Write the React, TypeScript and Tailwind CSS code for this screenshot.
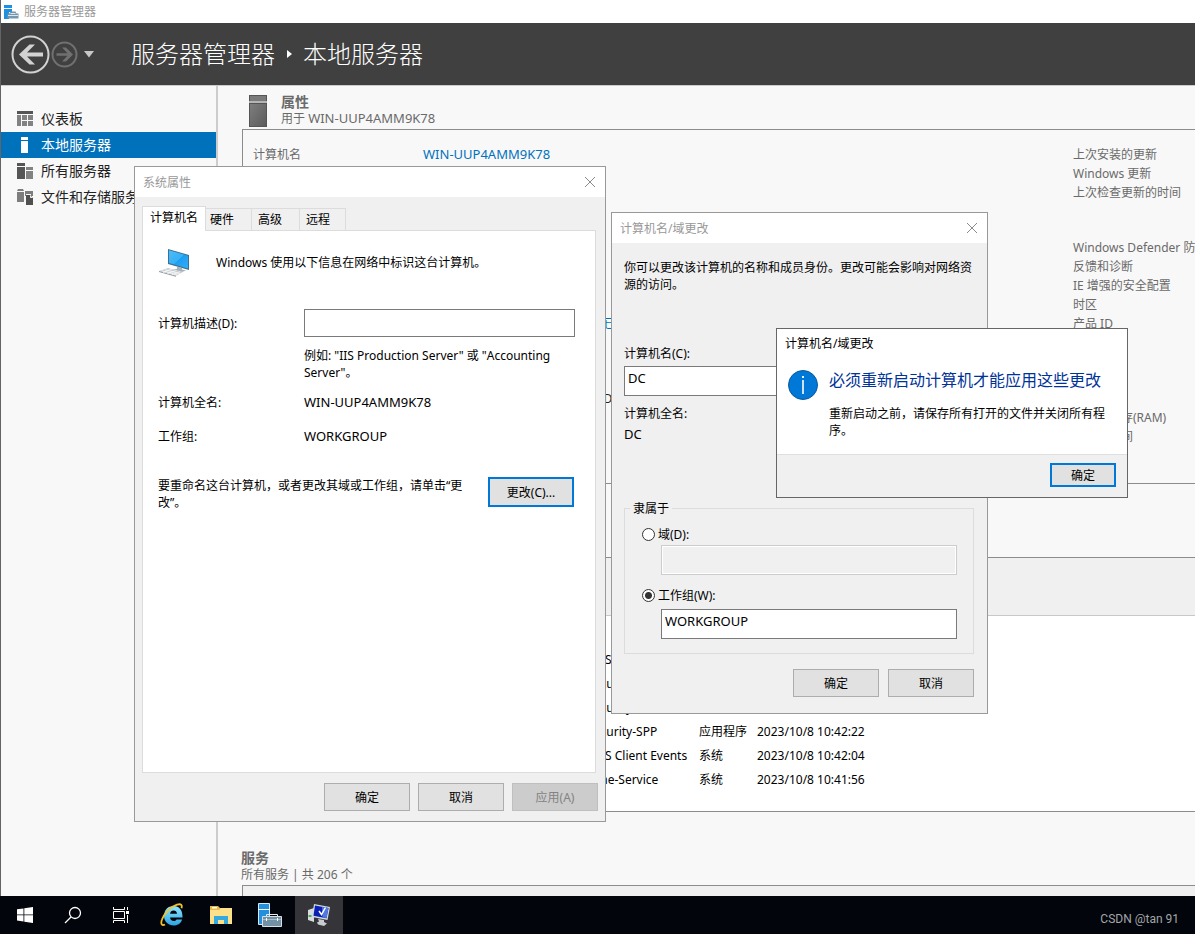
import React from 'react';

interface DialogProps {
  title: string;
  className: string;
  children: React.ReactNode;
}

interface PushButtonProps {
  children: React.ReactNode;
  className?: string;
  disabled?: boolean;
  isDefault?: boolean;
}

const events = [
  { id: 1014, level: '警告', source: 'Microsoft-Windows-DNS Client Events', log: '系统', date: '2023/10/8 10:47:31' },
  { id: 8198, level: '错误', source: 'Microsoft-Windows-Security-SPP', log: '应用程序', date: '2023/10/8 10:44:10' },
  { id: 8198, level: '错误', source: 'Microsoft-Windows-Security-SPP', log: '应用程序', date: '2023/10/8 10:43:52' },
  { id: 8198, level: '错误', source: 'Microsoft-Windows-Security-SPP', log: '应用程序', date: '2023/10/8 10:42:22' },
  { id: 1014, level: '警告', source: 'Microsoft-Windows-DNS Client Events', log: '系统', date: '2023/10/8 10:42:04' },
  { id: 134, level: '警告', source: 'Microsoft-Windows-Time-Service', log: '系统', date: '2023/10/8 10:41:56' },
];

const rightLabels = [
  ['上次安装的更新', 'Windows 更新', '上次检查更新的时间'],
  ['Windows Defender 防病毒', '反馈和诊断', 'IE 增强的安全配置', '时区', '产品 ID'],
  ['处理器', '安装的内存(RAM)', '总磁盘空间'],
];

function PushButton({ children, className = '', disabled, isDefault }: PushButtonProps) {
  const look = disabled
    ? 'border border-[#bfbfbf] bg-[#cccccc] text-[#838383]'
    : isDefault
      ? 'border-2 border-[#0078d7] bg-[#e1e1e1]'
      : 'border border-[#adadad] bg-[#e1e1e1]';
  return (
    <button type="button" disabled={disabled} className={`flex items-center justify-center ${look} ${className}`}>
      {children}
    </button>
  );
}

function Dialog({ title, className, children }: DialogProps) {
  return (
    <section className={`absolute border border-[#999999] bg-[#f0f0f0] ${className}`}>
      <header className="flex h-[30px] items-center justify-between bg-white pl-2 pr-[9px] text-[#999999]">
        <h2>{title}</h2>
        <button type="button" aria-label="关闭">
          <svg width="12" height="12" viewBox="0 0 12 12" stroke="#8a8a8a" fill="none">
            <path d="M1 1l10 10M11 1L1 11" />
          </svg>
        </button>
      </header>
      {children}
    </section>
  );
}

function SectionHeading({ title, children }: { title: string; children: React.ReactNode }) {
  return (
    <div className="h-[35px] text-[#6a6a6a]">
      <h2 className="text-sm leading-4 font-bold">{title}</h2>
      <p>{children}</p>
    </div>
  );
}

function DashboardIcon() {
  return (
    <svg width="16" height="16" viewBox="0 0 16 16" fill="#828282">
      <rect width="16" height="3" fill="#555" />
      <rect y="4" width="4" height="11" />
      <rect x="5" y="4" width="5" height="5" />
      <rect x="11" y="4" width="5" height="5" />
      <rect x="5" y="10" width="5" height="5" />
      <rect x="11" y="10" width="5" height="5" />
    </svg>
  );
}

function LocalServerIcon() {
  return (
    <svg width="16" height="16" viewBox="0 0 16 16" fill="#fff">
      <rect x="4" width="7" height="3" />
      <rect x="4" y="4" width="7" height="12" />
    </svg>
  );
}

function AllServersIcon() {
  return (
    <svg width="16" height="16" viewBox="0 0 16 16" fill="#555">
      <rect width="8" height="3" />
      <rect y="4" width="8" height="12" />
      <rect x="9" y="4" width="7" height="3" fill="#828282" />
      <rect x="9" y="8" width="7" height="8" fill="#828282" />
    </svg>
  );
}

function FileStorageIcon() {
  return (
    <svg width="16" height="16" viewBox="0 0 16 16" fill="#7d7d7d">
      <path d="M1 0h5l1 2H0z" />
      <path d="M0 3h7v10H0z" />
      <path d="M8 2h8v5H8z" />
      <path d="M9 6h4l3 3v7H9z" fill="#505050" />
      <path d="M9 5.500h5M13.500 6.500v2h2" fill="none" stroke="#f8f8f8" />
    </svg>
  );
}

function ComputerIcon() {
  return (
    <svg width="32" height="32" viewBox="0 0 32 32">
      <defs>
        <linearGradient id="screen" x1="0" y1="0" x2="1" y2="1">
          <stop offset="0" stopColor="#4dbcf8" />
          <stop offset="0.5" stopColor="#36b0f7" />
          <stop offset="0.52" stopColor="#1e9df0" />
          <stop offset="1" stopColor="#35aef8" />
        </linearGradient>
      </defs>
      <path d="M10 3l21 6v15L10 18z" fill="#3f6f91" />
      <path d="M11 4.300l19 5.500v12.800L11 17z" fill="url(#screen)" />
      <path d="M19 20.500l5 1.500v1.500l4 1-4 1.500-9-2.300 4-1z" fill="#a9b2b8" />
      <path d="M1 25l9-3 15 4-7 3.800z" fill="#c9ced2" />
      <path d="M1 25l17 4.800v1L1 26z" fill="#8f989e" />
      <path d="M4 24.800l15 4M7 23.800l15 4M5 26.500l9-3.500M9.500 27.500l9-3M14 28.800l8-3.200" stroke="#fff" strokeWidth="0.7" />
    </svg>
  );
}

function Sidebar() {
  const items = [
    { label: '仪表板', icon: <DashboardIcon /> },
    { label: '本地服务器', icon: <LocalServerIcon />, active: true },
    { label: '所有服务器', icon: <AllServersIcon /> },
    { label: '文件和存储服务', icon: <FileStorageIcon /> },
  ];
  return (
    <nav className="w-[217px] shrink-0 border-r-2 border-[#cccccc] pt-5 text-sm">
      {items.map((item) => (
        <a
          key={item.label}
          href="#"
          className={`flex h-[26px] items-center gap-2 pl-4 whitespace-nowrap ${
            item.active ? 'bg-[#0072bc] text-white' : 'text-[#222222]'
          }`}
        >
          {item.icon}
          {item.label}
        </a>
      ))}
    </nav>
  );
}

function Properties() {
  return (
    <section className="pt-2">
      <div className="flex gap-[14px] pl-[31px]">
        <svg className="mt-px" width="18" height="32" viewBox="0 0 18 32">
          <defs>
            <linearGradient id="tower" x1="0" y1="0" x2="1" y2="1">
              <stop offset="0" stopColor="#7d7d7d" />
              <stop offset="1" stopColor="#5c5c5c" />
            </linearGradient>
          </defs>
          <rect width="18" height="32" fill="#555" />
          <rect x="1" y="1" width="16" height="5" fill="#7a7a7a" />
          <rect y="6" width="18" height="2" fill="#b5b5b5" />
          <rect x="1" y="9" width="16" height="22" fill="url(#tower)" />
        </svg>
        <SectionHeading title="属性">
          用于 <span className="text-[13px]">WIN-UUP4AMM9K78</span>
        </SectionHeading>
      </div>
      <div className="ml-6 grid h-[355px] grid-cols-[170px_1fr_122px] border border-r-0 border-[#8c8c8c] pt-[15px] pl-[10px] leading-[19px] whitespace-nowrap text-[#6a6a6a]">
        <span>计算机名</span>
        <div className="text-[#0072bc]">
          <a href="#" className="text-[13px]">WIN-UUP4AMM9K78</a>
          <p className="mt-[150px]">由 DHCP 分配的 IPv4 地址，IPv6 已启用</p>
          <p className="mt-[56px] text-[#222222]">Microsoft Windows Server 2019 Datacenter</p>
        </div>
        <div>
          {rightLabels.map((group, i) => (
            <ul key={group[0]} className={i === 0 ? '' : i === 1 ? 'mt-[36px]' : 'mt-[56px]'}>
              {group.map((label) => (
                <li key={label}>{label}</li>
              ))}
            </ul>
          ))}
        </div>
      </div>
    </section>
  );
}

function Events() {
  return (
    <section className="pt-[38px]">
      <div className="pl-[23px]">
        <SectionHeading title="事件">所有事件 | 共 34 个</SectionHeading>
      </div>
      <div className="ml-6 h-[255px] border border-r-0 border-[#8c8c8c] bg-white">
        <div className="h-[58px] border-b border-[#c8c8c8] bg-[#f0f0f0]" />
        <table className="w-[720px] table-fixed text-left text-black">
          <thead>
            <tr className="h-[31px]">
              <th className="w-[132px] pl-[10px] font-normal">服务器名称</th>
              <th className="w-[50px] font-normal">ID</th>
              <th className="w-[50px] font-normal">严重性</th>
              <th className="w-[224px] font-normal">源</th>
              <th className="w-[58px] font-normal">日志</th>
              <th className="font-normal">日期和时间</th>
            </tr>
          </thead>
          <tbody>
            {events.map((event) => (
              <tr key={event.date} className="h-6 whitespace-nowrap">
                <td className="pl-[10px]">WIN-UUP4AMM9K78</td>
                <td>{event.id}</td>
                <td>{event.level}</td>
                <td>{event.source}</td>
                <td>{event.log}</td>
                <td>{event.date}</td>
              </tr>
            ))}
          </tbody>
        </table>
      </div>
    </section>
  );
}

function Services() {
  return (
    <section className="pt-[38px]">
      <div className="pl-[23px]">
        <SectionHeading title="服务">所有服务 | 共 206 个</SectionHeading>
      </div>
      <div className="ml-6 h-14 border border-r-0 border-[#8c8c8c] bg-[#f0f0f0]" />
    </section>
  );
}

function SystemProperties() {
  return (
    <Dialog title="系统属性" className="top-[166px] left-[134px] w-[472px]">
      <div className="pt-[9px] pr-[9px] pl-[7px]">
        <div role="tablist" className="flex h-6 items-end">
          <button type="button" role="tab" aria-selected="true" className="relative z-10 -mb-px h-[25px] w-16 border border-b-0 border-[#dcdcdc] bg-white pb-1">
            计算机名
          </button>
          <button type="button" role="tab" className="h-[22px] w-[46px] border-t border-r border-[#dcdcdc] pl-1 text-left">硬件</button>
          <button type="button" role="tab" className="h-[22px] w-12 border-t border-r border-[#dcdcdc] pl-[6px] text-left">高级</button>
          <button type="button" role="tab" className="h-[22px] w-[46px] border-t border-r border-[#dcdcdc] pl-[6px] text-left">远程</button>
        </div>
        <div className="h-[543px] border border-[#dcdcdc] bg-white pt-4 pr-5 pl-[15px]">
          <div className="flex h-[30px] items-center gap-[26px]">
            <ComputerIcon />
            <p>Windows 使用以下信息在网络中标识这台计算机。</p>
          </div>
          <div className="mt-8 grid grid-cols-[146px_1fr] items-center">
            <label htmlFor="description">计算机描述(D):</label>
            <input id="description" type="text" className="h-7 border border-[#7a7a7a] bg-white px-1" />
            <p className="col-start-2 mt-[10px]">例如: "IIS Production Server" 或 "Accounting Server"。</p>
          </div>
          <dl className="mt-[13px] grid grid-cols-[146px_1fr] gap-y-[17px]">
            <dt>计算机全名:</dt>
            <dd className="text-[13px]">WIN-UUP4AMM9K78</dd>
            <dt>工作组:</dt>
            <dd className="text-[13px]">WORKGROUP</dd>
          </dl>
          <div className="mt-8 flex items-start justify-between pr-px">
            <p className="w-[312px]">要重命名这台计算机，或者更改其域或工作组，请单击“更改”。</p>
            <PushButton isDefault className="h-[30px] w-[86px]">更改(C)...</PushButton>
          </div>
        </div>
      </div>
      <footer className="flex justify-end gap-2 py-[10px] pr-[7px]">
        <PushButton className="h-7 w-[86px]">确定</PushButton>
        <PushButton className="h-7 w-[86px]">取消</PushButton>
        <PushButton disabled className="h-7 w-[86px]">应用(A)</PushButton>
      </footer>
    </Dialog>
  );
}

const radioClass =
  'size-[13px] appearance-none rounded-full border border-[#333333] bg-white checked:bg-[radial-gradient(circle,#333333_3px,#ffffff_4px)]';

function NameChange() {
  return (
    <Dialog title="计算机名/域更改" className="top-[212px] left-[611px] w-[377px]">
      <div className="pt-4 pr-[13px] pb-4 pl-3">
        <p>你可以更改该计算机的名称和成员身份。更改可能会影响对网络资源的访问。</p>
        <label htmlFor="computer-name" className="mt-[52px] block">计算机名(C):</label>
        <input
          id="computer-name"
          type="text"
          defaultValue="DC"
          className="mt-1 block h-[30px] w-full border border-[#7a7a7a] bg-white px-[3px] pb-[6px] text-[13px]"
        />
        <p className="mt-[9px]">计算机全名:</p>
        <p className="mt-1 text-[13px]">DC</p>
        <fieldset className="mt-[57px] border border-[#dcdcdc] px-[5px] pb-[14px]">
          <legend className="px-[3px]">隶属于</legend>
          <div className="pt-[9px] pr-[11px] pl-3">
            <label className="flex items-center gap-[3px]">
              <input type="radio" name="member" className={radioClass} />
              域(D):
            </label>
            <div className="pt-[2px] pl-[19px]">
              <input
                type="text"
                aria-label="域"
                disabled
                className="block h-[30px] w-full border border-[#cccccc] bg-[#f0f0f0] inset-ring inset-ring-white"
              />
            </div>
            <label className="mt-3 flex items-center gap-[3px]">
              <input type="radio" name="member" defaultChecked className={radioClass} />
              工作组(W):
            </label>
            <div className="pt-[5px] pl-[19px]">
              <input
                type="text"
                aria-label="工作组"
                defaultValue="WORKGROUP"
                className="block h-[30px] w-full border border-[#7a7a7a] bg-white px-[3px] pb-[6px] text-[13px]"
              />
            </div>
          </div>
        </fieldset>
        <div className="mt-[15px] flex justify-end gap-[9px]">
          <PushButton className="h-7 w-[86px]">确定</PushButton>
          <PushButton className="h-7 w-[86px]">取消</PushButton>
        </div>
      </div>
    </Dialog>
  );
}

function RestartNotice() {
  return (
    <section className="absolute top-[328px] left-[776px] w-[352px] border border-[#666666] bg-white">
      <h2 className="pt-[6px] pl-2">计算机名/域更改</h2>
      <div className="flex gap-[11px] px-[11px] pt-[18px] pb-[15px]">
        <svg className="shrink-0" width="30" height="30" viewBox="0 0 30 30">
          <circle cx="15" cy="15" r="14.500" fill="#0078d7" stroke="#0b5a9d" />
          <path d="M15 10v14" stroke="#fff" strokeWidth="1.600" />
          <path d="M15 6v2" stroke="#fff" strokeWidth="1.800" />
        </svg>
        <div className="whitespace-normal">
          <h3 className="text-base leading-5 text-[#003399]">必须重新启动计算机才能应用这些更改</h3>
          <p className="mt-[15px]">重新启动之前，请保存所有打开的文件并关闭所有程序。</p>
        </div>
      </div>
      <footer className="flex justify-end border-t border-[#dfdfdf] bg-[#f0f0f0] pt-2 pr-[11px] pb-[10px]">
        <PushButton isDefault className="h-6 w-[66px]">确定</PushButton>
      </footer>
    </section>
  );
}

function Taskbar() {
  return (
    <footer className="flex h-[38px] shrink-0 items-center justify-between bg-[#02050b]">
      <div className="flex h-full items-center pl-px">
        <button type="button" aria-label="开始" className="flex w-12 justify-center">
          <svg width="16" height="16" viewBox="0 0 16 16" fill="#fff">
            <path d="M0 2.300L6.500 1.400v6.100H0zM7.300 1.300L16 0v7.500H7.300zM0 8.300h6.500v6.100L0 13.600zM7.300 8.300H16V16l-8.700-1.300z" />
          </svg>
        </button>
        <button type="button" aria-label="搜索" className="flex w-12 justify-center">
          <svg width="18" height="18" viewBox="0 0 18 18" fill="none" stroke="#fff" strokeWidth="1.300">
            <circle cx="11" cy="7" r="5.500" />
            <path d="M7 11l-6 6" />
          </svg>
        </button>
        <button type="button" aria-label="任务视图" className="flex w-12 justify-center">
          <svg width="16" height="16" viewBox="0 0 16 16" fill="none" stroke="#fff">
            <path d="M.5 0v2.500h11V0M.5 16v-2.500h11V16M.5 4.500h11v7H.5zM14.500 0v3M14.500 8v8" />
            <rect x="13" y="4" width="3" height="3" fill="#fff" stroke="none" />
          </svg>
        </button>
        <div className="ml-[3px] flex h-full items-center gap-px">
          <button type="button" aria-label="Internet Explorer" className="flex w-12 justify-center">
            <svg width="24" height="24" viewBox="0 0 24 24" fill="none">
              <defs>
                <linearGradient id="ie" x1="0" y1="0" x2="0" y2="1">
                  <stop offset="0" stopColor="#8fe6ff" />
                  <stop offset="1" stopColor="#2aa5e4" />
                </linearGradient>
              </defs>
              <path
                d="M13.500 3C7.800 3 4 7.200 4 12.800S8 22.500 13.800 22.500c4.200 0 7.200-2.300 8.300-6h-5.600c-.6 1-1.500 1.500-2.700 1.500-2.200 0-3.600-1.300-3.700-3.500h12.400C22.800 7.500 19.500 3 13.500 3zm-3.400 7.800c.3-2 1.600-3.200 3.500-3.200s3.200 1.200 3.400 3.200z"
                fill="url(#ie)"
                fillRule="evenodd"
              />
              <path d="M5 21.500c-3.500 1.800-4.500-1-3-5C4 10.500 11 3.500 17 1.700c4-1.200 5.500 0 4.500 3.500" stroke="#f3c32c" strokeWidth="1.800" />
            </svg>
          </button>
          <button type="button" aria-label="文件资源管理器" className="flex w-12 justify-center">
            <svg width="22" height="20" viewBox="0 0 22 20">
              <path d="M0 1h8l2 2h12v16H0z" fill="#e9b84c" />
              <path d="M2 2h5v1.500H2z" fill="#fff" />
              <path d="M0 5h9l2-2h11v16H0z" fill="#fde08a" />
              <path d="M4 19v-8h14v8h-4v-4H8v4z" fill="#35a8e0" />
            </svg>
          </button>
          <button type="button" aria-label="服务器管理器" className="flex w-12 justify-center">
            <svg width="24" height="24" viewBox="0 0 24 24">
              <path d="M.5.500h11v21H.5z" fill="#2290dc" stroke="#d7ebf8" />
              <path d="M0 6.500h12" stroke="#fff" />
              <path d="M8.500 13v-1.500h11V13" fill="none" stroke="#e8eef2" />
              <path d="M4.500 13.500h19v10h-19z" fill="#7291a5" stroke="#d5e0e7" />
              <path d="M5 16.500h18" stroke="#a9bdca" />
              <path d="M8.500 15v3M19.500 15v3" stroke="#fff" />
            </svg>
          </button>
          <button type="button" aria-label="系统属性" className="flex h-full w-12 items-center justify-center bg-[#353539]">
            <svg width="24" height="24" viewBox="0 0 24 24">
              <path d="M1 7l6-2v14l-6-2z" fill="#d8dbe0" />
              <path d="M1.500 12h3v2h-3z" fill="#48b04a" />
              <path d="M7 1l16 3-2.500 13L5 14z" fill="#d3d7de" />
              <path d="M8 2.500l13.500 2.500-2 10.300L6.500 12.800z" fill="#0a1fb4" />
              <path d="M15 3.800l6.500 1.200-2 10.300-4-1z" fill="#4f78e0" />
              <path d="M12 8l2.500 3.500 4-7" fill="none" stroke="#fff" strokeWidth="1.500" />
              <path d="M11 16l6 1v2l3 1.500-3 2.500-6-1.500-1-2 2-1z" fill="#c8cbd0" />
            </svg>
          </button>
        </div>
      </div>
      <span className="pt-2 pr-4 font-[Roboto,sans-serif] text-xs text-[#a3a5a8]">CSDN @tan 91</span>
    </footer>
  );
}

export default function App() {
  return (
    <div className="relative flex h-screen w-full flex-col overflow-hidden bg-[#f8f8f8] font-['Noto_Sans','Noto_Sans_CJK_SC',sans-serif] text-xs leading-[17px] text-black">
      <div className="flex min-h-0 flex-1 flex-col border-l border-[#646464]">
        <div className="flex h-[23px] shrink-0 items-center gap-[5px] bg-white pl-[3px] text-[#999999]">
          <svg width="15" height="14" viewBox="0 0 15 14">
            <path d="M0 0h8v3H0zM0 4h8v3H5v7H0z" fill="#1f8fe0" />
            <path d="M3.500 8.500h2l1-2h5l1 2h2v5h-11z" fill="#7397ad" />
            <path d="M6.500 8.500h5M4 10.500h10" stroke="#dbe6ec" />
          </svg>
          <span>服务器管理器</span>
        </div>
        <header className="flex h-[63px] shrink-0 items-center border-b border-[#cccccc] bg-[#404040] pl-[10px] text-white">
          <button type="button" aria-label="后退">
            <svg width="39" height="39" viewBox="0 0 39 39">
              <circle cx="19.500" cy="19.500" r="18" fill="none" stroke="#d2d2d2" strokeWidth="2" />
              <path d="M8 19.500L18.500 9.500h5.500l-8 8h16v4H16l8 8h-5.500z" fill="#d2d2d2" />
            </svg>
          </button>
          <button type="button" aria-label="前进" className="ml-px">
            <svg width="27" height="27" viewBox="0 0 27 27">
              <circle cx="13.500" cy="13.500" r="12" fill="none" stroke="#707070" strokeWidth="2" />
              <path d="M22 13.500L15 6.500h-4l5.500 5.700H5.500v2.600h11L11 20.500h4z" fill="#707070" />
            </svg>
          </button>
          <button type="button" aria-label="历史记录" className="ml-[5px]">
            <svg width="12" height="7" viewBox="0 0 12 7" fill="#c8c8c8">
              <path d="M1 0h10L6 6.500z" />
            </svg>
          </button>
          <h1 className="ml-9 flex items-center text-2xl font-light">
            服务器管理器
            <svg className="mx-[11px]" width="6" height="8" viewBox="0 0 6 8" fill="#fff">
              <path d="M1 0l5 4-5 4z" />
            </svg>
            本地服务器
          </h1>
        </header>
        <div className="flex min-h-0 flex-1">
          <Sidebar />
          <main className="min-w-0 flex-1 overflow-hidden">
            <Properties />
            <Events />
            <Services />
          </main>
        </div>
      </div>
      <Taskbar />
      <SystemProperties />
      <NameChange />
      <RestartNotice />
    </div>
  );
}
